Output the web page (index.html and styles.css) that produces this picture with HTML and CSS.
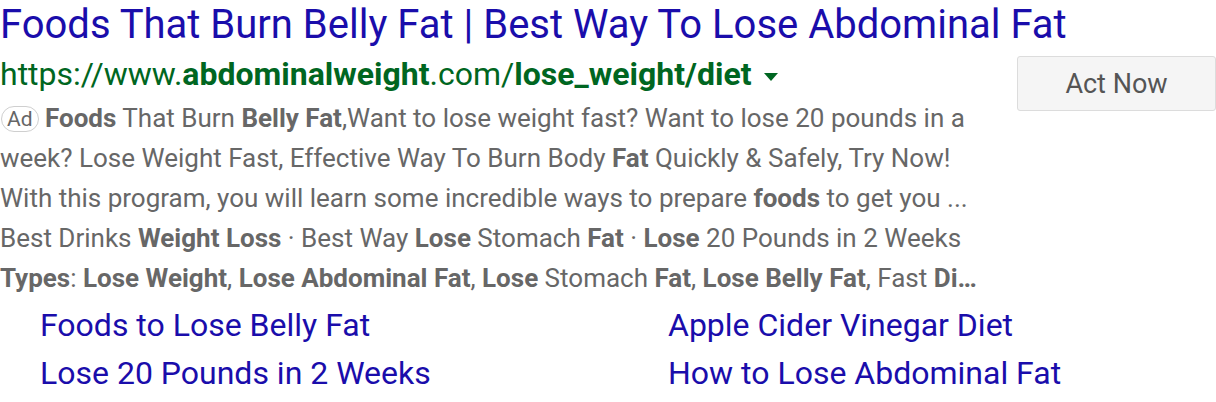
FILE: index.html
```html
<!DOCTYPE html>
<html>
<head>
<meta charset="utf-8">
<link rel="stylesheet" href="styles.css">
</head>
<body>
<div class="ad">
  <h3 class="title">Foods That Burn Belly Fat | Best Way To Lose Abdominal Fat</h3>
  <div class="main">
    <div class="left">
      <div class="url">https://www.<b>abdominalweight</b>.com/<b>lose_weight/diet</b><span class="caret"></span></div>
      <div class="desc">
        <p class="para"><span class="badge">Ad</span> <b>Foods</b> That Burn <b>Belly Fat</b>,Want to lose weight fast? Want to lose 20 pounds in a week? Lose Weight Fast, Effective Way To Burn Body <b>Fat</b> Quickly &amp; Safely, Try Now! With this program, you will learn some incredible ways to prepare <b>foods</b> to get you ...</p>
        <p class="line">Best Drinks <b>Weight Loss</b> · Best Way <b>Lose</b> Stomach <b>Fat</b> · <b>Lose</b> 20 Pounds in 2 Weeks</p>
        <p class="line"><b>Types</b>: <b>Lose Weight</b>, <b>Lose Abdominal Fat</b>, <b>Lose</b> Stomach <b>Fat</b>, <b>Lose Belly Fat</b>, Fast <b>Di…</b></p>
      </div>
    </div>
    <button class="cta">Act Now</button>
  </div>
  <div class="sitelinks">
    <a>Foods to Lose Belly Fat</a>
    <a>Apple Cider Vinegar Diet</a>
    <a>Lose 20 Pounds in 2 Weeks</a>
    <a>How to Lose Abdominal Fat</a>
  </div>
</div>
</body>
</html>
```
FILE: styles.css
```css
html, body {
  margin: 0;
  padding: 0;
  background: #fff;
}
body {
  font-family: Roboto, "Liberation Sans", Arial, sans-serif;
  width: 1216px;
  height: 402px;
  overflow: hidden;
}
.title {
  margin: 0;
  font-weight: 400;
  font-size: 40px;
  line-height: 50px;
  color: #1a0dab;
  white-space: nowrap;
}
.main {
  display: flex;
  align-items: flex-start;
}
.left {
  width: 990px;
}
.url {
  font-size: 32px;
  line-height: 48px;
  color: #006621;
  white-space: nowrap;
}
.url b {
  font-weight: 700;
}
.caret {
  display: inline-block;
  width: 0;
  height: 0;
  border-left: 7px solid transparent;
  border-right: 7px solid transparent;
  border-top: 8px solid #006621;
  margin-left: 13px;
  vertical-align: middle;
}
.desc {
  color: #676767;
  font-size: 26px;
  line-height: 40px;
}
.desc p {
  margin: 0;
}
.desc b {
  font-weight: 700;
}
.line {
  white-space: nowrap;
}
.badge {
  display: inline-block;
  font-size: 21px;
  line-height: 24px;
  padding: 0 5px;
  border: 1px solid #cfcfcf;
  border-radius: 14px;
  color: #666;
  margin-left: 1px;
  vertical-align: 1px;
}
.cta {
  margin-left: 27px;
  margin-top: 6px;
  width: 199px;
  height: 55px;
  background: #f5f5f5;
  border: 1px solid #dcdcdc;
  border-radius: 3px;
  font-family: inherit;
  font-size: 27px;
  color: #555;
  padding: 0;
}
.sitelinks {
  display: grid;
  grid-template-columns: 628px 1fr;
  padding-left: 40px;
  margin-top: 3px;
}
.sitelinks a {
  font-size: 32px;
  line-height: 48px;
  color: #1a0dab;
  white-space: nowrap;
}
```
